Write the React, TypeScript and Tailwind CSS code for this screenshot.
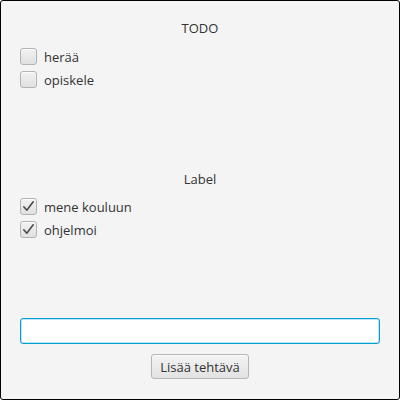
import React from "react";

type Task = { text: string; done: boolean };

const todo: Task[] = [
  { text: "herää", done: false },
  { text: "opiskele", done: false },
];

const done: Task[] = [
  { text: "mene kouluun", done: true },
  { text: "ohjelmoi", done: true },
];

function Box({ checked }: { checked: boolean }) {
  return (
    <div className="w-[17px] h-[17px] shrink-0 rounded-[3px] border border-[#b3b3b3] bg-gradient-to-b from-[#f2f2f2] to-[#e0e0e0] shadow-[inset_0_1px_0_#fbfbfb] flex items-center justify-center">
      {checked && (
        <svg width="13" height="13" viewBox="0 0 13 13">
          <path d="M1.8 6.8 L4.8 10.2 L11.2 1.8" fill="none" stroke="#4a4a4a" strokeWidth="1.6" strokeLinecap="round" strokeLinejoin="round" />
        </svg>
      )}
    </div>
  );
}

function TaskList({ tasks }: { tasks: Task[] }) {
  return (
    <div className="flex flex-col gap-[6px]">
      {tasks.map((t) => (
        <div key={t.text} className="flex items-center gap-[7px] h-[17px]">
          <Box checked={t.done} />
          <span className="leading-[18px]">{t.text}</span>
        </div>
      ))}
    </div>
  );
}

export default function App() {
  return (
    <div
      className="w-[400px] h-[400px] border border-black rounded-[3px] bg-[#f4f4f4] text-[13px] text-[#333333] flex flex-col px-[19px]"
      style={{ fontFamily: '"Open Sans", "Noto Sans", sans-serif' }}
    >
      <div className="mt-[18px] h-[18px] leading-[18px] text-center">TODO</div>
      <div className="mt-[11px]">
        <TaskList tasks={todo} />
      </div>

      <div className="mt-[82px] h-[18px] leading-[18px] text-center">Label</div>
      <div className="mt-[10px]">
        <TaskList tasks={done} />
      </div>

      <input
        className="mt-[80px] h-[26px] w-full rounded-[3px] border border-[#039ed3] bg-white shadow-[inset_0_0_0_1px_#bfe4f2] outline-none px-[7px]"
        defaultValue=""
      />

      <div className="mt-[10px] flex justify-center">
        <button className="h-[25px] w-[98px] rounded-[3px] border border-[#b5b5b5] bg-gradient-to-b from-[#f4f4f4] to-[#e2e2e2] shadow-[inset_0_1px_0_#fcfcfc] leading-[18px] text-[#333333]">
          Lisää tehtävä
        </button>
      </div>
    </div>
  );
}
